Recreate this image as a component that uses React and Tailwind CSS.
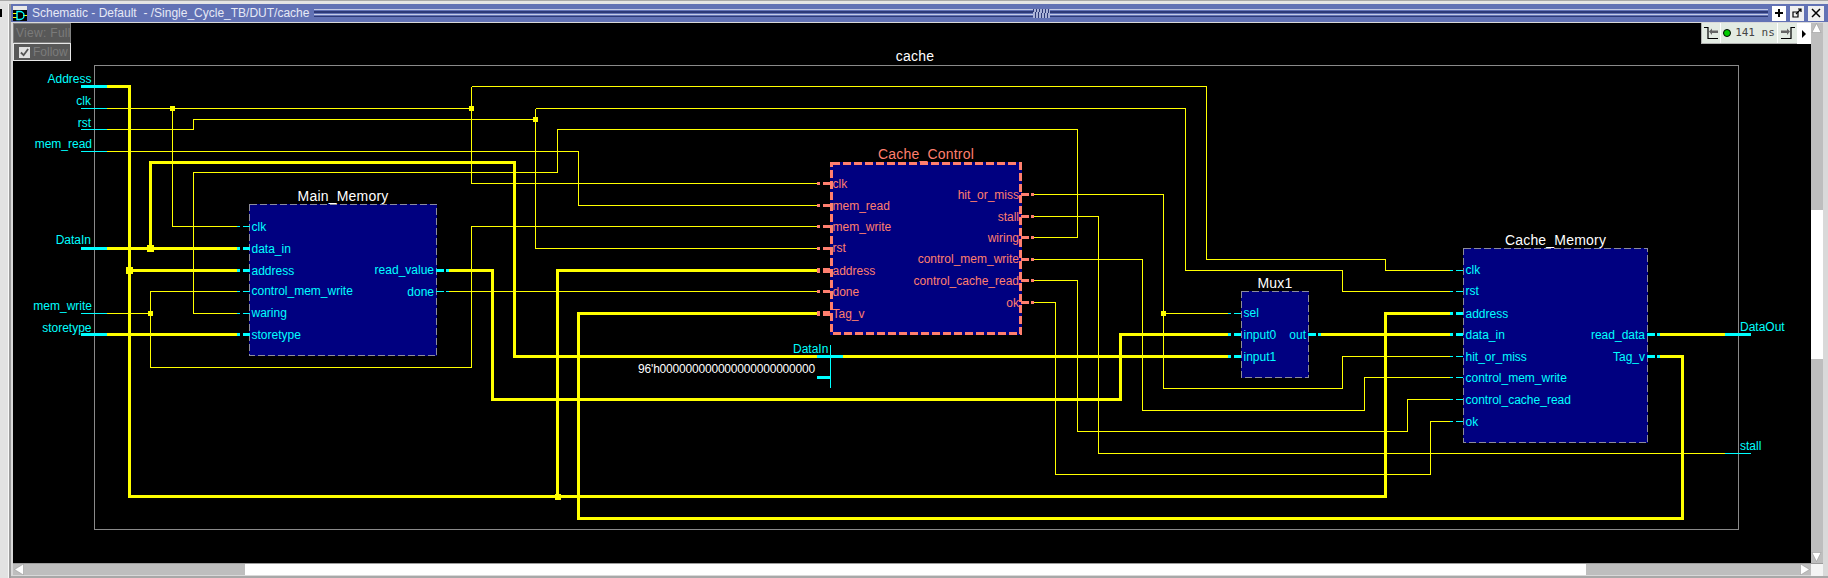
const sans = "font-['Liberation_Sans',Arial,sans-serif]";

const thin = [
  "M107 108.5H471.5",
  "M172.5 108.5V226.5H237",
  "M471.5 86.5V183.5H817",
  "M471.5 86.5H1206.5V259.5H1385.5V270.5H1450",
  "M107 129.5H193.5V119.5H535.5",
  "M535.5 108.5V248.5H817",
  "M535.5 108.5H1185.5V270.5H1342.5V291.5H1450",
  "M237 313.5H193.5V172.5H557.5V129.5H1077.5V237.5H1034",
  "M107 151.5H578.5V205.5H817",
  "M237 291.5H150.5V367.5H471.5V226.5H817",
  "M107 313.5H150.5",
  "M449 291.5H817",
  "M1034 194.5H1163.5V388.5H1342.5V356.5H1450",
  "M1163.5 313.5H1228",
  "M1034 216.5H1098.5V453.5H1725",
  "M1034 259.5H1142.5V410.5H1364.5V377.5H1450",
  "M1034 280.5H1077.5V431.5H1407.5V399.5H1450",
  "M1034 302.5H1055.5V474.5H1430.5V421.5H1450",
];
const thick = [
  "M107 86.5H129.5V496.5H1385.5V313.5H1450",
  "M129.5 270.5H237",
  "M557.5 496.5V270.5H817",
  "M107 248.5H237",
  "M150.5 248.5V162.5H514.5V356.5H1228",
  "M107 334.5H237",
  "M449 270.5H492.5V399.5H1120.5V334.5H1228",
  "M1320 334.5H1450",
  "M1660 334.5H1725",
  "M1660 356.5H1682.5V518.5H578.5V313.5H817",
];
const dots = [
  [172.5, 108.5, 5], [471.5, 108.5, 5], [535.5, 119.5, 5], [150.5, 313.5, 5],
  [1163.5, 313.5, 5], [150.5, 248.5, 7], [129.5, 270.5, 7], [557.5, 496.5, 6],
];

const cy = "#00ffff";
const sa = "#ff7f6e";
const stubs = [];
const inPort = (edge, y, w, c) => {
  stubs.push([edge - 13, edge - 10, y, w, c], [edge - 7, edge, y, w, c]);
};
const outPort = (edge, y, w, c) => {
  stubs.push([edge, edge + 8, y, w, c], [edge + 10, edge + 13, y, w, c]);
};
[[226.5, 1], [248.5, 3], [270.5, 3], [291.5, 1], [313.5, 1], [334.5, 3]].forEach(([y, w]) => inPort(250, y, w, cy));
[[270.5, 3], [291.5, 1]].forEach(([y, w]) => outPort(436, y, w, cy));
[[183.5, 3], [205.5, 3], [226.5, 3], [248.5, 3], [270.5, 5], [291.5, 3], [313.5, 5]].forEach(([y, w]) => inPort(830, y, w, sa));
[194.5, 216.5, 237.5, 259.5, 280.5, 302.5].forEach((y) => outPort(1021, y, 3, sa));
[[313.5, 1], [334.5, 3], [356.5, 3]].forEach(([y, w]) => inPort(1241, y, w, cy));
outPort(1308, 334.5, 3, cy);
[[270.5, 1], [291.5, 1], [313.5, 3], [334.5, 3], [356.5, 1], [377.5, 1], [399.5, 1], [421.5, 1]].forEach(([y, w]) => inPort(1463, y, w, cy));
outPort(1647, 334.5, 3, cy);
outPort(1647, 356.5, 3, cy);

const blocks = [
  {
    title: "Main_Memory", x: 249, y: 204, w: 188, h: 152, hot: false, tc: "text-white", lc: "text-[#00ffff]",
    left: [["clk", 226], ["data_in", 248], ["address", 270], ["control_mem_write", 290], ["waring", 312], ["storetype", 334]],
    right: [["read_value", 269], ["done", 291]],
  },
  {
    title: "Cache_Control", x: 830, y: 162, w: 192, h: 173, hot: true, tc: "text-[#ff7f6e]", lc: "text-[#ff7f6e]",
    left: [["clk", 183], ["mem_read", 205], ["mem_write", 226], ["rst", 247], ["address", 270], ["done", 291], ["Tag_v", 313]],
    right: [["hit_or_miss", 194], ["stall", 216], ["wiring", 237], ["control_mem_write", 258], ["control_cache_read", 280], ["ok", 302]],
  },
  {
    title: "Mux1", x: 1241, y: 291, w: 68, h: 87, hot: false, tc: "text-white", lc: "text-[#00ffff]",
    left: [["sel", 312], ["input0", 334], ["input1", 356]],
    right: [["out", 334]],
  },
  {
    title: "Cache_Memory", x: 1463, y: 248, w: 185, h: 195, hot: false, tc: "text-white", lc: "text-[#00ffff]",
    left: [["clk", 269], ["rst", 290], ["address", 313], ["data_in", 334], ["hit_or_miss", 356], ["control_mem_write", 377], ["control_cache_read", 399], ["ok", 421]],
    right: [["read_data", 334], ["Tag_v", 356]],
  },
];

const OX = 13;
const OY = 23;

const outer = [
  ["Address", 91.5, 79],
  ["clk", 91, 101],
  ["rst", 91, 122.5],
  ["mem_read", 92, 143.5],
  ["DataIn", 91, 240],
  ["mem_write", 92, 305.5],
  ["storetype", 91.5, 327.5],
];

function Block({ b }) {
  return (
    <div
      className="absolute bg-[#000080]"
      style={{ left: b.x - OX, top: b.y - OY, width: b.w, height: b.h }}
    >
      {b.left.map(([t, y]) => (
        <span
          key={t}
          className={`absolute left-[2.5px] text-[12px] leading-none whitespace-nowrap ${b.lc}`}
          style={{ top: y - b.y - 5 }}
        >
          {t}
        </span>
      ))}
      {b.right.map(([t, y]) => (
        <span
          key={t}
          className={`absolute right-[3px] text-[12px] leading-none whitespace-nowrap ${b.lc}`}
          style={{ top: y - b.y - 5 }}
        >
          {t}
        </span>
      ))}
      <span
        className={`absolute left-1/2 -translate-x-1/2 -top-[15px] text-[14px] leading-none whitespace-nowrap tracking-[0.2px] ${b.tc}`}
      >
        {b.title}
      </span>
    </div>
  );
}

function Arrow({ dir, cls }) {
  const pts = { up: "1,9 5.5,0 10,9", down: "1,0 5.5,9 10,0", left: "10,0 1,5.5 10,11", right: "1,0 10,5.5 1,11" }[dir];
  const box = dir === "up" || dir === "down" ? "0 0 11 10" : "0 0 11 11";
  return (
    <svg viewBox={box} className={cls}>
      <polygon points={pts} fill="#ffffff" stroke="#8f8f8f" strokeWidth="0.5" />
    </svg>
  );
}

function Stripes() {
  return (
    <div className="flex-1 h-[9px] flex flex-col justify-between">
      <div className="h-[1px] bg-[#c4cae6]" />
      <div className="h-[2px] bg-[#2e3a78]" />
      <div className="h-[1px] bg-[#c4cae6]" />
      <div className="h-[1px] bg-[#2e3a78]" />
    </div>
  );
}

export default function App() {
  return (
    <div className={`w-[1828px] h-[578px] overflow-hidden bg-[#d9d9d9] flex flex-col ${sans}`}>
      <div className="h-[1px] bg-[#a8a8a8] shrink-0" />
      <div className="h-[3px] bg-[#e4e4e4] shrink-0" />
      <div className="flex flex-1 min-h-0">
        <div className="w-[9px] bg-[#e2e2e2] border-r border-[#f8f8f8] shrink-0 pt-[5px]">
          <div className="w-[2px] h-[8px] bg-black" />
        </div>
        <div className="w-[2px] bg-[#9c9c9c] shrink-0" />
        <div className="flex-1 min-w-0 flex flex-col">
          {/* title bar */}
          <div className="h-[18px] bg-[#6272b5] flex items-center shrink-0 pl-[2px] pr-[4px]">
            <div className="w-[14px] h-[15px] bg-[#e8e8e8] flex flex-col justify-end">
              <svg viewBox="0 0 14 11" className="w-[14px] h-[11px] bg-black">
                <path d="M0 3.5H4M0 7.5H4M10 5.5H14" stroke="#ffff00" strokeWidth="1" />
                <path d="M4 1.5H7A4 4 0 0 1 7 9.5H4Z" fill="none" stroke="#00ffff" strokeWidth="1.4" />
              </svg>
            </div>
            <span className="ml-[5px] mr-[5px] text-[#e6e9f5] text-[12px] leading-none whitespace-pre">
              Schematic - Default  - /Single_Cycle_TB/DUT/cache
            </span>
            <Stripes />
            <div className="w-[17px] h-[9px] bg-[repeating-linear-gradient(100deg,#2e3a78_0px,#2e3a78_1px,#aab2d8_1px,#aab2d8_3px)] shrink-0" />
            <Stripes />
            <div className="flex ml-[4px] gap-[4px]">
              <div className="w-[14px] h-[15px] bg-white flex items-center justify-center">
                <svg viewBox="0 0 10 10" className="w-[10px] h-[10px]"><path d="M5 1V9M1 5H9" stroke="#000" strokeWidth="2" /></svg>
              </div>
              <div className="w-[14px] h-[15px] bg-[#f0f0f0] flex items-center justify-center">
                <svg viewBox="0 0 10 10" className="w-[10px] h-[10px]"><path d="M1 4H6V9H1Z" fill="none" stroke="#000" strokeWidth="1.2" /><path d="M4 6L9 1M6 1H9V4" fill="none" stroke="#000" strokeWidth="1.2" /></svg>
              </div>
              <div className="w-[16px] h-[15px] bg-[#f0f0f0] flex items-center justify-center">
                <svg viewBox="0 0 10 10" className="w-[10px] h-[10px]"><path d="M1 1L9 9M9 1L1 9" stroke="#000" strokeWidth="1.5" /></svg>
              </div>
            </div>
          </div>
          <div className="h-[1px] bg-[#d9d9d9] shrink-0" />

          {/* body */}
          <div className="flex flex-1 min-h-0">
            <div className="w-[2px] bg-[#d9d9d9] shrink-0" />
            <div className="flex-1 min-w-0 flex flex-col">
              <div className="flex flex-1 min-h-0">
                {/* canvas */}
                <div className="relative flex-1 min-w-0 bg-black overflow-hidden">
                  <div className="absolute left-0 top-0 w-[58px] h-[20px] bg-[#585858] text-[#7b7b7b] text-[12px] tracking-[0.3px] leading-[18px] pl-[2px] border border-[#808080] whitespace-nowrap">
                    View: Full
                  </div>
                  <div className="absolute left-0 top-[20px] w-[58px] h-[18px] bg-[#585858] text-[#7b7b7b] text-[12px] leading-[16px] border border-[#e8e8e8] flex items-center gap-[3px] pl-[5px]">
                    <span className="w-[11px] h-[11px] bg-[#e0e0e0] flex items-center justify-center shrink-0">
                      <svg viewBox="0 0 10 10" className="w-[9px] h-[9px]"><path d="M1 5L4 8L9 1" fill="none" stroke="#555" strokeWidth="2" /></svg>
                    </span>
                    Follow
                  </div>

                  {/* frame */}
                  <div className="absolute left-[81px] top-[42px] w-[1645px] h-[465px] border border-[#8a8a8a]" />
                  <span className="absolute left-[902px] top-[26px] -translate-x-1/2 text-white text-[14px] leading-none tracking-[0.2px] whitespace-nowrap">
                    cache
                  </span>

                  {blocks.map((b) => <Block key={b.title} b={b} />)}

                  {/* wires */}
                  <svg
                    className="absolute left-0 top-0 pointer-events-none"
                    width="1828"
                    height="578"
                    viewBox={`${OX} ${OY} 1828 578`}
                    shapeRendering="crispEdges"
                  >
                    {blocks.map((b) => {
                      const s = b.hot ? 3 : 1;
                      return (
                        <rect
                          key={b.title}
                          x={b.x + s / 2}
                          y={b.y + s / 2}
                          width={b.w - s}
                          height={b.h - s}
                          fill="none"
                          stroke={b.hot ? sa : "#8c8c9c"}
                          strokeWidth={s}
                          strokeDasharray={b.hot ? "8 3" : "7 3"}
                        />
                      );
                    })}
                    {thin.map((d) => <path key={d} d={d} fill="none" stroke="#ffff00" strokeWidth="1" />)}
                    {thick.map((d) => <path key={d} d={d} fill="none" stroke="#ffff00" strokeWidth="3" />)}
                    {dots.map(([x, y, s]) => <rect key={`${x}-${y}`} x={x - s / 2} y={y - s / 2} width={s} height={s} fill="#ffff00" />)}
                    {stubs.map(([a, b, y, w, c], i) => <rect key={i} x={a} y={y - w / 2} width={b - a} height={w} fill={c} />)}
                    <path d="M81 108.5H107M81 129.5H107M81 151.5H107M81 313.5H107M1725 453.5H1751" stroke="#00ffff" strokeWidth="1" />
                    <path d="M81 86.5H107M81 248.5H107M81 334.5H107M1725 334.5H1751" stroke="#00ffff" strokeWidth="3" />
                    <path d="M817 356.5H843M817 377.5H830" stroke="#00ffff" strokeWidth="3" />
                    <path d="M830.5 345V388" stroke="#00ffff" strokeWidth="1" />
                  </svg>

                  {/* external pin labels */}
                  {outer.map(([t, rx, y]) => (
                    <span
                      key={t}
                      className="absolute text-[#00ffff] text-[12px] leading-none whitespace-nowrap -translate-x-full"
                      style={{ left: rx - OX, top: y - OY - 6 }}
                    >
                      {t}
                    </span>
                  ))}
                  <span className="absolute left-[780px] top-[320px] text-[#00ffff] text-[12px] leading-none">DataIn</span>
                  <span className="absolute right-[996px] top-[340px] text-white text-[12px] leading-none whitespace-nowrap tracking-[-0.2px]">96'h000000000000000000000000</span>
                  <span className="absolute left-[1727px] top-[298px] text-[#00ffff] text-[12px] leading-none">DataOut</span>
                  <span className="absolute left-[1727px] top-[417px] text-[#00ffff] text-[12px] leading-none">stall</span>

                  {/* time toolbar */}
                  <div className="absolute right-0 top-0 h-[21px] flex bg-white">
                    <div className="flex h-[21px] bg-[#e3ebe3] border-b border-l border-[#b0b0b0] items-center">
                      <div className="w-[19px] flex justify-center border-r border-white h-full items-center">
                        <svg viewBox="0 0 16 14" className="w-[16px] h-[14px]"><path d="M1 1.5H5V12.5H15" fill="none" stroke="#000" strokeWidth="1.2" /><path d="M6 5.5L9 2.5V4.5H15V7H9V9Z" fill="#666" /></svg>
                      </div>
                      <div className="w-[57px] flex items-center justify-center gap-[4px] text-[11px] font-['DejaVu_Sans_Mono',monospace] text-[#444] border-r border-white h-full whitespace-pre">
                        <span className="w-[8px] h-[8px] rounded-full bg-[#00cc00] border border-black shrink-0" />
                        141 ns
                      </div>
                      <div className="w-[19px] flex justify-center h-full items-center">
                        <svg viewBox="0 0 16 14" className="w-[16px] h-[14px]"><path d="M15 1.5H11V12.5H1" fill="none" stroke="#000" strokeWidth="1.2" /><path d="M10 5.5L7 2.5V4.5H1V7H7V9Z" fill="#666" /></svg>
                      </div>
                    </div>
                    <div className="w-[14px] flex items-center justify-center">
                      <svg viewBox="0 0 4 8" className="w-[4px] h-[8px]"><polygon points="0,0 4,4 0,8" fill="#000" /></svg>
                    </div>
                  </div>
                </div>

                {/* vertical scrollbar */}
                <div className="w-[12px] bg-[#bebebe] flex flex-col shrink-0">
                  <Arrow dir="up" cls="w-[11px] h-[11px] shrink-0" />
                  <div className="h-[176px] shrink-0" />
                  <div className="h-[149px] bg-white shrink-0" />
                  <div className="flex-1" />
                  <Arrow dir="down" cls="w-[11px] h-[11px] shrink-0" />
                </div>
              </div>

              {/* horizontal scrollbar */}
              <div className="h-[13px] flex shrink-0 border-t border-[#9c9c9c]">
                <div className="flex-1 flex bg-[#bebebe] h-[11px]">
                  <Arrow dir="left" cls="w-[12px] h-[11px] shrink-0" />
                  <div className="w-[220px] shrink-0" />
                  <div className="flex-1 bg-white" />
                  <div className="w-[213px] shrink-0" />
                  <Arrow dir="right" cls="w-[12px] h-[11px] shrink-0" />
                </div>
                <div className="w-[12px] bg-[#f4f4f4] shrink-0" />
              </div>
            </div>
            <div className="w-[5px] bg-[#d9d9d9] shrink-0" />
          </div>
          <div className="h-[2px] bg-[#a8a8a8] shrink-0" />
        </div>
      </div>
    </div>
  );
}
